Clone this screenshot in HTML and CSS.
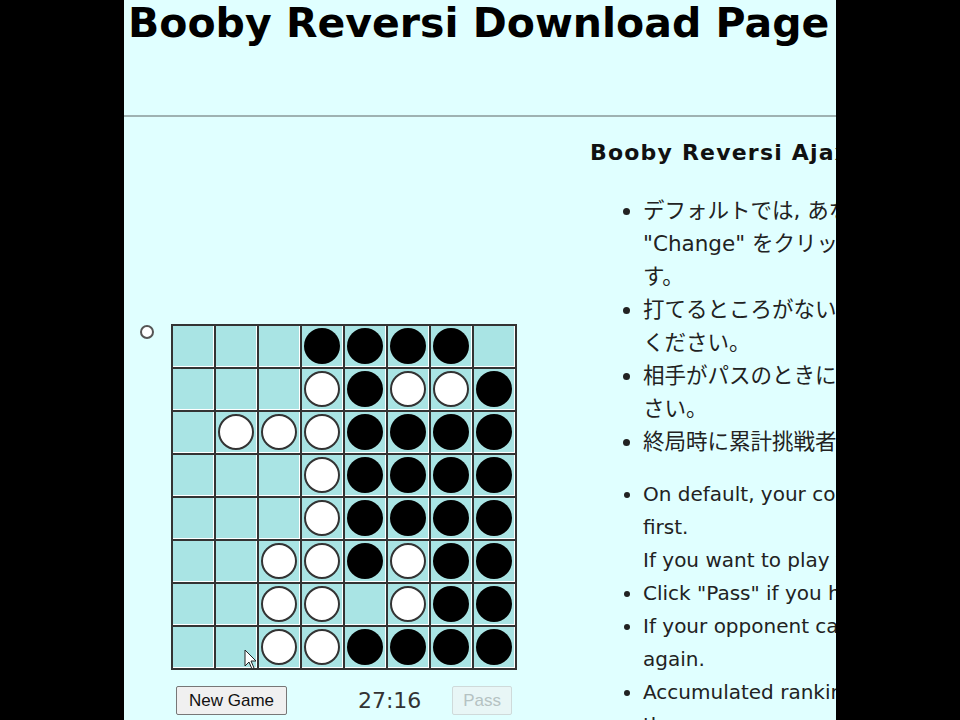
FILE: index.html
```html
<!DOCTYPE html>
<html lang="ja">
<head>
  <meta charset="UTF-8" />
  <title>Booby Reversi Download Page</title>
  <link rel="stylesheet" href="styles.css">
</head>
<body>

<div class="page">
  <h1>Booby Reversi Download Page</h1>
  <hr>

  <div class="content">
    <div class="game">
      <div class="board-row">
        <span class="turn"></span>
        <div class="board" id="board"></div>
      </div>
      <div class="controls">
        <button class="btn">New Game</button>
        <span class="timer">27:16</span>
        <button class="btn" disabled>Pass</button>
      </div>
    </div>

    <div class="info">
      <h3>Booby Reversi Ajax Version</h3>
      <ul class="ja">
        <li>デフォルトでは, あなたが白で後手です。先手にしたいときは<br>"Change" をクリックしてください。あなたが黒になりま<br>す。</li>
        <li>打てるところがないときは "Pass" をクリックして<br>ください。</li>
        <li>相手がパスのときにはもう一度打ってくだ<br>さい。</li>
        <li>終局時に累計挑戦者ランキングが表示されます。</li>
      </ul>
      <ul>
        <li>On default, your color is white and you play second, not<br>first.<br>If you want to play first, click "Change".</li>
        <li>Click "Pass" if you have no place to put.</li>
        <li>If your opponent cannot put, please put your stone<br>again.</li>
        <li>Accumulated ranking of challengers is shown at the end of<br>the game.</li>
      </ul>
    </div>
  </div>

  <svg class="cursor" width="14" height="22" viewBox="0 0 14 22">
    <path d="M1 1 L1 17 L5 13 L8 20 L10 19 L7 12 L12 12 Z" fill="#fff" stroke="#222" stroke-width="1"/>
  </svg>
</div>

<script>
  const rows = [
    "...BBBB.",
    "...WBWWB",
    ".WWWBBBB",
    "...WBBBB",
    "...WBBBB",
    "..WWBWBB",
    "..WW.WBB",
    "..WWBBBB"
  ];
  const board = document.getElementById("board");
  rows.forEach(row => {
    for (const c of row) {
      const cell = document.createElement("div");
      cell.className = "cell";
      if (c !== ".") {
        const stone = document.createElement("div");
        stone.className = "stone " + (c === "B" ? "black" : "white");
        cell.appendChild(stone);
      }
      board.appendChild(cell);
    }
  });
</script>

</body>
</html>
```

FILE: styles.css
```css
html, body {
  margin: 0;
  background: #000;
}
.page {
  position: relative;
  width: 712px;
  height: 720px;
  margin-left: 124px;
  background: #e0ffff;
  overflow: hidden;
  font-family: "DejaVu Sans", "Noto Sans CJK JP", sans-serif;
  color: #222;
}
h1 {
  margin: 0;
  padding: 0 0 0 4px;
  font-size: 41px;
  line-height: 46px;
  font-weight: bold;
  color: #000;
  white-space: nowrap;
}
hr {
  margin: 69px 0 0;
  border: none;
  border-top: 2px solid #9fb2b2;
}
.content {
  display: flex;
}
.game {
  flex-shrink: 0;
  width: 466px;
  padding-top: 207px;
}
.board-row {
  display: flex;
  align-items: flex-start;
}
.turn {
  width: 10px;
  height: 10px;
  margin: 1px 0 0 16px;
  border: 2px solid #555;
  border-radius: 50%;
  background: #fff;
}
.board {
  display: grid;
  grid-template-columns: repeat(8, 41px);
  grid-auto-rows: 41px;
  gap: 2px;
  padding: 2px;
  margin-left: 17px;
  background: #333;
}
.cell {
  background: #a9e4e4;
  border-right: 1px solid #fff;
  border-bottom: 1px solid #fff;
  display: flex;
  align-items: center;
  justify-content: center;
}
.stone {
  width: 36px;
  height: 36px;
  border-radius: 50%;
  box-sizing: border-box;
}
.stone.black {
  background: #000;
}
.stone.white {
  background: #fff;
  border: 2px solid #333;
}
.controls {
  display: flex;
  align-items: center;
  justify-content: space-between;
  width: 336px;
  margin: 16px 0 0 52px;
}
.btn {
  font-family: "Liberation Sans", sans-serif;
  font-size: 17px;
  height: 29px;
  padding: 0 12px;
  background: #f0f0f0;
  color: #111;
  border: 1px solid #777;
  border-radius: 2px;
}
.btn:disabled {
  color: #b5c2c2;
  border-color: #cfdada;
  background: #e8f6f6;
  padding: 0 10px;
}
.timer {
  font-size: 22px;
  color: #333;
  margin-left: 40px;
}
.info {
  white-space: nowrap;
  font-size: 20px;
  line-height: 33px;
}
.info h3 {
  margin: 21px 0 26px;
  font-size: 22px;
  line-height: 30px;
  letter-spacing: 1.2px;
  color: #111;
}
.info ul {
  margin: 0 0 20px;
  padding-left: 53px;
}
.info ul.ja {
  font-size: 21.5px;
}
.cursor {
  position: absolute;
  left: 120px;
  top: 649px;
}
```
